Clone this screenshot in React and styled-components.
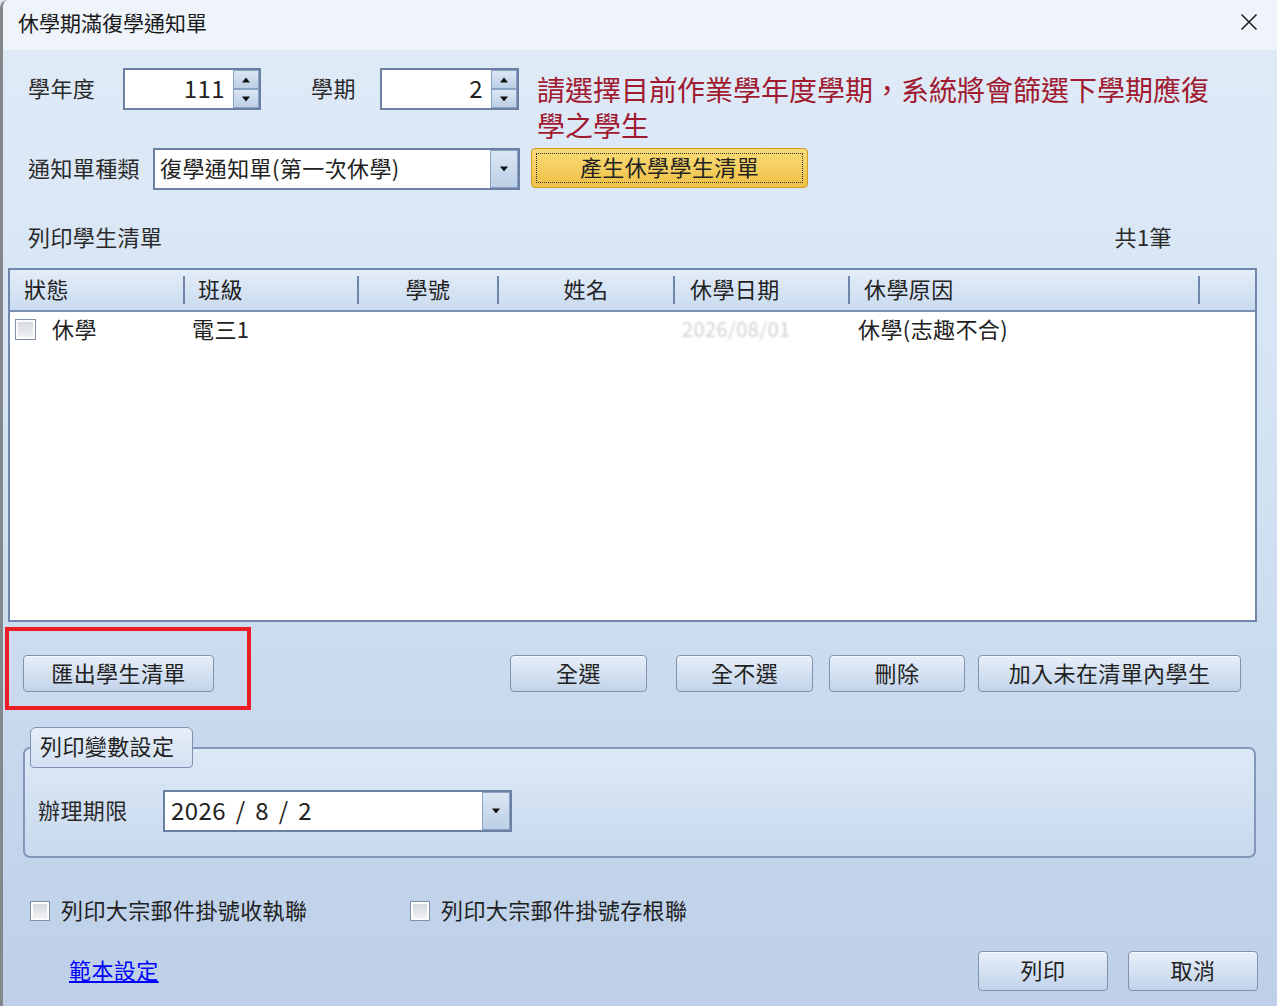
import React from "react";
import styled, { createGlobalStyle } from "styled-components";

const FONT = `"Noto Sans CJK TC", "Noto Sans", "Liberation Sans", sans-serif`;

const GlobalStyle = createGlobalStyle`
  html, body { margin: 0; padding: 0; }
  body { font-family: ${FONT}; color: #222; background: #dfeaf7; }
  * { box-sizing: border-box; }
`;

const Window = styled.div`
  width: 1277px;
  height: 1006px;
  display: flex;
  flex-direction: column;
  border-left: 3px solid #84878c;
  border-top-left-radius: 8px;
  overflow: hidden;
`;

const TitleBar = styled.div`
  height: 50px;
  flex-shrink: 0;
  background: #eef4fa;
  display: flex;
  align-items: center;
  justify-content: space-between;
  padding: 0 19px 6px 15px;
  font-size: 21px;
  color: #1a1a1a;
  line-height: 1;
`;

const Body = styled.div`
  flex: 1;
  background: linear-gradient(to bottom, #dfeaf7 0%, #d4e3f3 40%, #bdd0e8 100%);
  padding: 18px 20px 0 5px;
  display: flex;
  flex-direction: column;
  font-size: 22px;
  letter-spacing: 0.4px;
  line-height: 1.2;
`;

const Row = styled.div`
  display: flex;
  align-items: center;
  height: ${(p) => p.$h || 42}px;
  margin-top: ${(p) => p.$mt || 0}px;
  padding-left: ${(p) => p.$pl || 0}px;
  flex-shrink: 0;
`;

const Label = styled.div`
  width: ${(p) => p.$w}px;
  margin-left: ${(p) => p.$ml || 0}px;
  margin-top: -3px;
  flex-shrink: 0;
  font-size: 22px;
  color: #2a2a2a;
  white-space: nowrap;
`;

const Hint = styled.div`
  align-self: flex-start;
  margin-top: 3px;
  margin-left: 18px;
  width: 680px;
  height: 42px;
  flex-shrink: 0;
  font-size: 28px;
  letter-spacing: 0;
  line-height: 36px;
  color: #a01a30;
`;

const Field = styled.div`
  width: ${(p) => p.$w}px;
  height: 42px;
  flex-shrink: 0;
  border: 2px solid #6c80a3;
  background: #fff;
  display: flex;
  align-items: stretch;
`;

const NumberText = styled.div`
  flex: 1;
  text-align: right;
  padding-right: 8px;
  font-size: 24px;
  line-height: 35px;
  color: #222;
`;

const FieldText = styled.div`
  flex: 1;
  padding-left: ${(p) => p.$pl || 5}px;
  font-size: ${(p) => p.$fs || 22}px;
  word-spacing: ${(p) => p.$ws || 0}px;
  line-height: 35px;
  color: #222;
  white-space: nowrap;
`;

const SpinCol = styled.div`
  width: 26px;
  display: flex;
  flex-direction: column;
`;

const SpinBtn = styled.div`
  flex: 1;
  border: 1px solid #8aa1c3;
  background: linear-gradient(#dbe6f3, #bccfe6);
  display: flex;
  align-items: center;
  justify-content: center;
`;

const DropBtn = styled.div`
  width: 28px;
  border: 1px solid #8aa1c3;
  background: linear-gradient(#dbe6f3, #bccfe6);
  display: flex;
  align-items: center;
  justify-content: center;
`;

const Tri = ({ up }) => (
  <svg width="10" height="6" viewBox="0 0 10 6">
    {up ? <polygon points="1,5.5 9,5.5 5,0.5" fill="#111" /> : <polygon points="1,0.5 9,0.5 5,5.5" fill="#111" />}
  </svg>
);

const Spinner = ({ w, value }) => (
  <Field $w={w}>
    <NumberText>{value}</NumberText>
    <SpinCol>
      <SpinBtn><Tri up /></SpinBtn>
      <SpinBtn><Tri /></SpinBtn>
    </SpinCol>
  </Field>
);

const Combo = ({ w, text, fs, pl, ws }) => (
  <Field $w={w}>
    <FieldText $fs={fs} $pl={pl} $ws={ws}>{text}</FieldText>
    <DropBtn><Tri /></DropBtn>
  </Field>
);

const GoldButton = styled.div`
  align-self: flex-start;
  margin-left: 11px;
  width: 277px;
  height: 40px;
  flex-shrink: 0;
  border: 1px solid #d29e24;
  border-radius: 4px;
  background: linear-gradient(#f9dc78, #efc146);
  outline: 1.5px dotted #333;
  outline-offset: -6px;
  display: flex;
  align-items: center;
  justify-content: center;
  padding-bottom: 3px;
  font-size: 22px;
  color: #222;
`;

const ListHeader = styled.div`
  margin-top: 28px;
  height: 40px;
  flex-shrink: 0;
  display: flex;
  align-items: center;
  justify-content: space-between;
  padding: 0 85px 3px 20px;
  font-size: 22px;
  color: #2a2a2a;
`;

const Table = styled.div`
  margin-top: 10px;
  height: 354px;
  flex-shrink: 0;
  border: 2px solid #6f86aa;
  background: #fff;
  display: flex;
  flex-direction: column;
`;

const HeaderRow = styled.div`
  height: 42px;
  flex-shrink: 0;
  display: flex;
  align-items: center;
  border-bottom: 2px solid #7a90b2;
  background: linear-gradient(#e4edf8, #c9dbf0);
  font-size: 22px;
  color: #222;
`;

const HeadCell = styled.div`
  width: ${(p) => p.$w}px;
  flex-shrink: 0;
  padding-left: ${(p) => p.$pl || 0}px;
  margin-top: -3px;
  text-align: ${(p) => p.$align || "left"};
  white-space: nowrap;
`;

const Divider = styled.div`
  width: 2px;
  height: 28px;
  flex-shrink: 0;
  background: #6f86aa;
`;

const DataRow = styled.div`
  height: 36px;
  flex-shrink: 0;
  display: flex;
  align-items: center;
  font-size: 22px;
  color: #222;
`;

const DataCell = styled.div`
  width: ${(p) => p.$w}px;
  flex-shrink: 0;
  padding-left: ${(p) => p.$pl || 0}px;
  display: flex;
  align-items: center;
  white-space: nowrap;
`;

const CellText = styled.span`
  margin-top: -4px;
`;

const Faded = styled.span`
  color: #d0d0d0;
  filter: blur(0.8px);
  font-size: 20px;
  margin-top: -3px;
`;

const Check = styled.div`
  width: ${(p) => p.$s || 21}px;
  height: ${(p) => p.$s || 21}px;
  flex-shrink: 0;
  border: 1px solid #8090a8;
  background: linear-gradient(#d3d7dd, #f3f4f6);
  box-shadow: inset 0 0 0 2px #fbfbfb;
  margin-right: ${(p) => p.$mr || 0}px;
`;

const ActionRow = styled.div`
  margin-top: 5px;
  height: 83px;
  flex-shrink: 0;
  display: flex;
  align-items: flex-start;
`;

const RedFrame = styled.div`
  margin-left: -3px;
  width: 246px;
  height: 83px;
  flex-shrink: 0;
  border: 4px solid #ec1c24;
  padding: 24px 0 0 14px;
`;

const WinButton = styled.div`
  width: ${(p) => p.$w}px;
  height: ${(p) => p.$h || 37}px;
  margin-left: ${(p) => p.$ml || 0}px;
  flex-shrink: 0;
  border: 1px solid #8192ae;
  border-radius: 4px;
  background: linear-gradient(#e7eff9, #c2d3ea);
  box-shadow: inset 0 1px 0 #f5f9fd;
  display: flex;
  align-items: center;
  justify-content: center;
  padding-bottom: 3px;
  font-size: 22px;
  color: #222;
  white-space: nowrap;
`;

const ButtonGroup = styled.div`
  margin-left: auto;
  margin-right: 16px;
  margin-top: 28px;
  display: flex;
`;

const GroupBox = styled.div`
  margin: 17px 1px 0 15px;
  flex-shrink: 0;
  display: flex;
  flex-direction: column;
`;

const GroupTab = styled.div`
  position: relative;
  z-index: 1;
  margin-left: 7px;
  margin-bottom: -21px;
  width: 163px;
  height: 41px;
  border: 1.5px solid #7d91b0;
  border-radius: 6px 6px 4px 4px;
  background: linear-gradient(#e6eef8, #d4e1f2);
  display: flex;
  align-items: center;
  padding: 0 0 4px 9px;
  font-size: 22px;
  color: #222;
`;

const GroupFrame = styled.div`
  height: 111px;
  border: 2px solid #8297b9;
  border-radius: 7px;
  background: linear-gradient(#dde9f6, #c8d9ee);
  padding: 41px 0 0 13px;
  display: flex;
  align-items: flex-start;
`;

const CheckRow = styled.div`
  margin-top: 42px;
  height: 22px;
  flex-shrink: 0;
  display: flex;
  align-items: center;
  padding-left: 22px;
`;

const CheckItem = styled.div`
  width: ${(p) => p.$w || "auto"};
  display: flex;
  align-items: center;
  font-size: 22px;
  color: #222;
  white-space: nowrap;
`;

const BottomRow = styled.div`
  margin-top: 29px;
  height: 40px;
  flex-shrink: 0;
  display: flex;
  align-items: center;
  padding-left: 61px;
`;

const Link = styled.a`
  color: #0000ff;
  text-decoration: underline;
  font-size: 22px;
  margin-top: -4px;
  cursor: pointer;
`;

const FooterButtons = styled.div`
  margin-left: auto;
  margin-right: -1px;
  display: flex;
  gap: 20px;
`;

const headCols = [
  { w: 173, pl: 14, t: "狀態" },
  { w: 172, pl: 13, t: "班級" },
  { w: 138, align: "center", t: "學號" },
  { w: 174, align: "center", t: "姓名" },
  { w: 173, pl: 15, t: "休學日期" },
  { w: 348, pl: 14, t: "休學原因" },
];

export default function App() {
  return (
    <>
      <GlobalStyle />
      <Window>
        <TitleBar>
          <span>休學期滿復學通知單</span>
          <svg width="18" height="18" viewBox="0 0 18 18">
            <path d="M1.5 1.5 L16.5 16.5 M16.5 1.5 L1.5 16.5" stroke="#222" strokeWidth="1.6" fill="none" />
          </svg>
        </TitleBar>
        <Body>
          <Row $pl={20}>
            <Label $w={95}>學年度</Label>
            <Spinner w={138} value="111" />
            <Label $w={69} $ml={50}>學期</Label>
            <Spinner w={139} value="2" />
            <Hint>請選擇目前作業學年度學期，系統將會篩選下學期應復學之學生</Hint>
          </Row>
          <Row $pl={20} $mt={38}>
            <Label $w={125}>通知單種類</Label>
            <Combo w={367} text="復學通知單(第一次休學)" fs={22} />
            <GoldButton>產生休學學生清單</GoldButton>
          </Row>

          <ListHeader>
            <span>列印學生清單</span>
            <span>共1筆</span>
          </ListHeader>

          <Table>
            <HeaderRow>
              {headCols.map((c) => (
                <React.Fragment key={c.t}>
                  <HeadCell $w={c.w} $pl={c.pl} $align={c.align}>{c.t}</HeadCell>
                  <Divider />
                </React.Fragment>
              ))}
            </HeaderRow>
            <DataRow>
              <DataCell $w={175} $pl={5}>
                <Check $mr={16} />
                <CellText>休學</CellText>
              </DataCell>
              <DataCell $w={174} $pl={7}><CellText>電三1</CellText></DataCell>
              <DataCell $w={140} />
              <DataCell $w={176} />
              <DataCell $w={175} $pl={7}><Faded>2026/08/01</Faded></DataCell>
              <DataCell $w={348} $pl={8}><CellText>休學(志趣不合)</CellText></DataCell>
            </DataRow>
          </Table>

          <ActionRow>
            <RedFrame>
              <WinButton $w={191}>匯出學生清單</WinButton>
            </RedFrame>
            <ButtonGroup>
              <WinButton $w={137}>全選</WinButton>
              <WinButton $w={137} $ml={29}>全不選</WinButton>
              <WinButton $w={136} $ml={16}>刪除</WinButton>
              <WinButton $w={263} $ml={13}>加入未在清單內學生</WinButton>
            </ButtonGroup>
          </ActionRow>

          <GroupBox>
            <GroupTab>列印變數設定</GroupTab>
            <GroupFrame>
              <Row>
                <Label $w={125}>辦理期限</Label>
                <Combo w={349} text="2026 / 8 / 2" fs={24} pl={6} ws={4} />
              </Row>
            </GroupFrame>
          </GroupBox>

          <CheckRow>
            <CheckItem $w="380px">
              <Check $s={20} $mr={11} />
              <CellText>列印大宗郵件掛號收執聯</CellText>
            </CheckItem>
            <CheckItem>
              <Check $s={20} $mr={11} />
              <CellText>列印大宗郵件掛號存根聯</CellText>
            </CheckItem>
          </CheckRow>

          <BottomRow>
            <Link>範本設定</Link>
            <FooterButtons>
              <WinButton $w={130} $h={40}>列印</WinButton>
              <WinButton $w={130} $h={40}>取消</WinButton>
            </FooterButtons>
          </BottomRow>
        </Body>
      </Window>
    </>
  );
}
